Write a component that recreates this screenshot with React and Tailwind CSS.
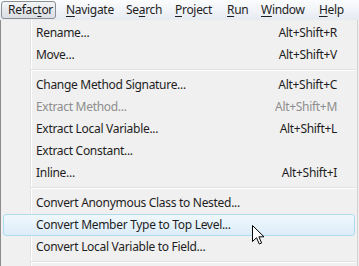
const menus = [
  { label: 'Refactor', pre: 'Refac', key: 't', post: 'or', w: 'w-[55px] mr-[3px]', open: true },
  { label: 'Navigate', pre: '', key: 'N', post: 'avigate', w: 'w-[60px]' },
  { label: 'Search', pre: 'Se', key: 'a', post: 'rch', w: 'w-[49px]' },
  { label: 'Project', pre: '', key: 'P', post: 'roject', w: 'w-[52px]' },
  { label: 'Run', pre: '', key: 'R', post: 'un', w: 'w-[34px]' },
  { label: 'Window', pre: '', key: 'W', post: 'indow', w: 'w-[58px]' },
  { label: 'Help', pre: '', key: 'H', post: 'elp', w: 'w-[40px]' },
];

const items = [
  { text: 'Rename...', keys: 'Alt+Shift+R' },
  { text: 'Move...', keys: 'Alt+Shift+V' },
  { sep: true },
  { text: 'Change Method Signature...', keys: 'Alt+Shift+C' },
  { text: 'Extract Method...', keys: 'Alt+Shift+M', disabled: true },
  { text: 'Extract Local Variable...', keys: 'Alt+Shift+L' },
  { text: 'Extract Constant...' },
  { text: 'Inline...', keys: 'Alt+Shift+I' },
  { sep: true },
  { text: 'Convert Anonymous Class to Nested...' },
  { text: 'Convert Member Type to Top Level...', hot: true },
  { text: 'Convert Local Variable to Field...' },
  { sep: true },
];

function Cursor() {
  return (
    <svg className="absolute left-[252px] top-[225px]" width="13" height="20" viewBox="0 0 13 20">
      <path
        d="M0.5 0.5 L0.5 16.5 L4.5 12.7 L7.3 19 L9.6 18 L6.9 11.8 L12 11.8 Z"
        fill="#fff"
        stroke="#000"
        strokeWidth="1"
        strokeLinejoin="miter"
      />
    </svg>
  );
}

export default function App() {
  return (
    <div className="relative w-[359px] h-[266px] overflow-hidden bg-[#f0f0f0] text-[12px] tracking-[-0.3px] text-[#1e1e1e] font-['Noto_Sans','Open_Sans',sans-serif]">
      <div className="flex items-center h-[20px] pl-[1px] bg-[linear-gradient(to_bottom,#fbfcfd,#e6ebf2)]">
        {menus.map(m => (
          <div
            key={m.label}
            className={`${m.w} h-[18px] flex items-center pl-[6px] leading-none ${m.open ? 'rounded-[3px] border border-[#8a8f96] bg-[linear-gradient(to_bottom,#f3f4f6,#dadde2)]' : 'border border-transparent'}`}
          >
            <span>
              {m.pre}
              <span className="underline underline-offset-[2px]">{m.key}</span>
              {m.post}
            </span>
          </div>
        ))}
      </div>

      <div className="h-[246px] w-[358px] pt-[2px] border-l border-[#8c8c8c] border-r border-r-[#d2d2d2] bg-[linear-gradient(to_right,#f0f0f0_29px,#e2e3e3_29px,#e2e3e3_30px,#ffffff_30px,#ffffff_31px,#f0f0f0_31px)]">
        {items.map((it, i) =>
          it.sep ? (
            <div key={i} className="h-[8px] flex items-center pl-[30px] pr-[2px]">
              <div className="w-full h-[2px] border-t border-[#e0e0e0] border-b border-b-white" />
            </div>
          ) : (
            <div
              key={i}
              className={`mx-[2px] h-[22px] flex items-center justify-between pl-[32px] pr-[17px] rounded-[3px] border ${it.hot ? 'border-[#aedcf0] bg-[linear-gradient(to_bottom,#f0f8fd,#dcecf8)]' : 'border-transparent'} ${it.disabled ? 'text-[#8d8d8d]' : ''}`}
            >
              <span>{it.text}</span>
              {it.keys && <span>{it.keys}</span>}
            </div>
          )
        )}
      </div>
      <Cursor />
    </div>
  );
}
